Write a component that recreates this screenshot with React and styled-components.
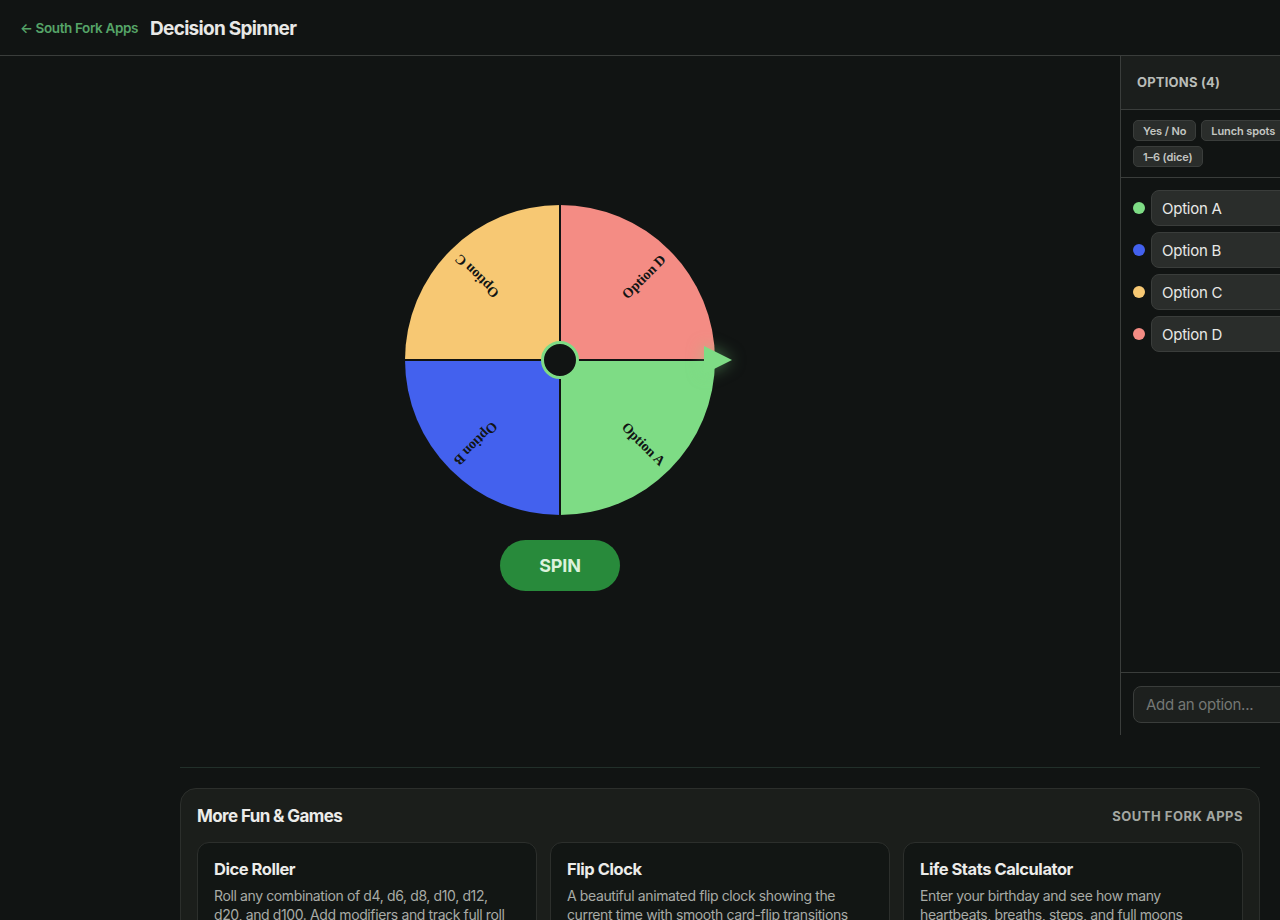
import React, { useState } from 'react';
import styled, { createGlobalStyle } from 'styled-components';

const GlobalStyle = createGlobalStyle`
  html, body {
    margin: 0;
    padding: 0;
    background: #111413;
    overflow-x: hidden;
  }
  * {
    box-sizing: border-box;
  }
`;

const Page = styled.div`
  width: 1440px;
  color: #e8e8e6;
  font-family: Inter, "Noto Sans", sans-serif;
`;

const Header = styled.header`
  height: 56px;
  display: flex;
  align-items: center;
  gap: 12px;
  padding: 0 20px;
  border-bottom: 1px solid #3a3d3b;
`;

const BackLink = styled.a`
  color: #56a468;
  font-size: 13.5px;
  font-weight: 600;
  letter-spacing: -0.38px;
  text-decoration: none;
`;

const Title = styled.h1`
  margin: 0;
  padding-top: 1px;
  font-size: 19px;
  font-weight: 700;
  letter-spacing: -0.7px;
  color: #e8e8e6;
`;

const Main = styled.main`
  display: flex;
  height: 679px;
`;

const Stage = styled.section`
  flex: 1;
  display: flex;
  flex-direction: column;
  align-items: center;
  gap: 25px;
  padding-top: 149px;
`;

const WheelWrap = styled.div`
  position: relative;
  width: 310px;
  height: 310px;
`;

const Pointer = styled.svg`
  position: absolute;
  left: 299px;
  top: 141px;
  filter: drop-shadow(0 0 8px rgba(126, 220, 133, 0.5));
`;

const SpinButton = styled.button`
  width: 120px;
  height: 51px;
  border: none;
  border-radius: 26px;
  background: #288a3b;
  color: #dcf2dc;
  font-family: inherit;
  font-size: 18px;
  font-weight: 700;
  letter-spacing: -0.2px;
  cursor: pointer;
`;

const Panel = styled.aside`
  width: 320px;
  display: flex;
  flex-direction: column;
  border-left: 1px solid #3a3d3b;
`;

const PanelHead = styled.div`
  height: 54px;
  display: flex;
  align-items: center;
  padding: 0 16px 2px;
  background: #1b1e1c;
  border-bottom: 1px solid #3a3d3b;
  color: #b9bcb8;
  font-size: 13px;
  font-weight: 700;
  letter-spacing: 0.2px;
`;

const Presets = styled.div`
  height: 68px;
  padding: 10px 12px 0;
  border-bottom: 1px solid #3a3d3b;
`;

const PresetRow = styled.div`
  display: flex;
  flex-wrap: wrap;
  gap: 5px;
  width: 180px;
`;

const Chip = styled.button`
  height: 21px;
  padding: 0 9px;
  border: 1px solid #3a3d3b;
  border-radius: 5px;
  background: #2a2d2b;
  color: #c4c6c2;
  font-family: inherit;
  font-size: 11px;
  font-weight: 600;
  letter-spacing: -0.1px;
  cursor: pointer;
`;

const OptionList = styled.div`
  flex: 1;
  display: flex;
  flex-direction: column;
  gap: 6px;
  padding: 12px;
`;

const OptionRow = styled.div`
  display: flex;
  align-items: center;
  gap: 6px;
`;

const Dot = styled.span`
  width: 12px;
  height: 12px;
  flex: none;
  border-radius: 50%;
  background: ${(p) => p.$color};
`;

const OptionInput = styled.input`
  flex: 1;
  min-width: 0;
  height: 36px;
  padding: 0 10px;
  border: 1px solid #3a3d3b;
  border-radius: 8px;
  background: #2a2d2b;
  color: #e8e8e6;
  font-family: inherit;
  font-size: 15px;
  letter-spacing: -0.25px;
  outline: none;
`;

const PanelFoot = styled.div`
  height: 63px;
  padding: 13px 12px 0;
  background: #111413;
  border-top: 1px solid #3a3d3b;
`;

const AddInput = styled.input`
  width: 100%;
  height: 37px;
  padding: 0 12px;
  border: 1px solid #3a3d3b;
  border-radius: 8px;
  background: #1d201e;
  color: #e8e8e6;
  font-family: inherit;
  font-size: 15px;
  letter-spacing: -0.3px;
  outline: none;

  &::placeholder {
    color: #747774;
  }
`;

const Below = styled.div`
  width: 1080px;
  margin: 32px auto 40px;
  padding-top: 20px;
  border-top: 1px solid #22302a;
`;

const MoreCard = styled.section`
  padding: 16px;
  border: 1px solid #2c2f2c;
  border-radius: 16px;
  background: #1b1e1b;
`;

const MoreHead = styled.div`
  display: flex;
  align-items: center;
  justify-content: space-between;
  height: 22px;
  margin-bottom: 15px;
`;

const MoreTitle = styled.h2`
  margin: 0;
  font-size: 17px;
  font-weight: 700;
  letter-spacing: -0.6px;
  color: #ececea;
`;

const Brand = styled.span`
  color: #a4a7a2;
  font-size: 13px;
  font-weight: 700;
  letter-spacing: 0.5px;
`;

const AppGrid = styled.div`
  display: grid;
  grid-template-columns: repeat(3, 1fr);
  gap: 13px;
`;

const AppCard = styled.a`
  display: block;
  padding: 15px 16px 16px;
  border: 1px solid #2c2f2c;
  border-radius: 12px;
  background: #121614;
  text-decoration: none;
`;

const AppName = styled.h3`
  margin: 0 0 6px;
  font-size: 16.5px;
  line-height: 22px;
  font-weight: 700;
  letter-spacing: -0.45px;
  color: #ececea;
`;

const AppText = styled.p`
  margin: 0;
  max-width: 300px;
  font-size: 14px;
  line-height: 19px;
  letter-spacing: -0.38px;
  color: #a8aba6;
`;

const options = [
  { label: 'Option A', color: '#7edc85' },
  { label: 'Option B', color: '#4361ee' },
  { label: 'Option C', color: '#f7c873' },
  { label: 'Option D', color: '#f48c84' },
];

const apps = [
  {
    name: 'Dice Roller',
    text: 'Roll any combination of d4, d6, d8, d10, d12, d20, and d100. Add modifiers and track full roll history as you play.',
  },
  {
    name: 'Flip Clock',
    text: 'A beautiful animated flip clock showing the current time with smooth card-flip transitions and a fullscreen mode.',
  },
  {
    name: 'Life Stats Calculator',
    text: "Enter your birthday and see how many heartbeats, breaths, steps, and full moons you've lived through.",
  },
];

function Wheel() {
  const r = 155;
  const slice = (Math.PI * 2) / options.length;

  return (
    <svg width="310" height="310" viewBox="-155 -155 310 310">
      {options.map((opt, i) => {
        const a0 = i * slice;
        const a1 = (i + 1) * slice;
        const d = `M0 0 L${r * Math.cos(a0)} ${r * Math.sin(a0)} A${r} ${r} 0 0 1 ${r * Math.cos(a1)} ${r * Math.sin(a1)} Z`;
        return <path key={opt.label} d={d} fill={opt.color} />;
      })}
      {options.map((opt, i) => (
        <line
          key={opt.label}
          x2={r * Math.cos(i * slice)}
          y2={r * Math.sin(i * slice)}
          stroke="#111413"
          strokeWidth="2"
        />
      ))}
      {options.map((opt, i) => (
        <text
          key={opt.label}
          transform={`rotate(${45 + i * 90})`}
          x="146"
          y="5"
          textAnchor="end"
          fontFamily='"Liberation Serif", serif'
          fontSize="14"
          fontWeight="700"
          fill="#111413"
        >
          {opt.label}
        </text>
      ))}
      <circle r="17.5" fill="#111413" stroke="#7edc85" strokeWidth="3" />
    </svg>
  );
}

export default function App() {
  const [items, setItems] = useState(options.map((o) => o.label));
  const [draft, setDraft] = useState('');

  return (
    <Page>
      <GlobalStyle />
      <Header>
        <BackLink href="#">← South Fork Apps</BackLink>
        <Title>Decision Spinner</Title>
      </Header>
      <Main>
        <Stage>
          <WheelWrap>
            <Wheel />
            <Pointer width="28" height="28" viewBox="0 0 28 28">
              <polygon points="0,0 28,14 0,28" fill="#7edc85" />
            </Pointer>
          </WheelWrap>
          <SpinButton>SPIN</SpinButton>
        </Stage>
        <Panel>
          <PanelHead>OPTIONS (4)</PanelHead>
          <Presets>
            <PresetRow>
              <Chip>Yes / No</Chip>
              <Chip>Lunch spots</Chip>
              <Chip>1–6 (dice)</Chip>
            </PresetRow>
          </Presets>
          <OptionList>
            {items.map((label, i) => (
              <OptionRow key={i}>
                <Dot $color={options[i].color} />
                <OptionInput
                  value={label}
                  onChange={(e) => setItems(items.map((v, j) => (j === i ? e.target.value : v)))}
                />
              </OptionRow>
            ))}
          </OptionList>
          <PanelFoot>
            <AddInput
              placeholder="Add an option..."
              value={draft}
              onChange={(e) => setDraft(e.target.value)}
            />
          </PanelFoot>
        </Panel>
      </Main>
      <Below>
        <MoreCard>
          <MoreHead>
            <MoreTitle>More Fun &amp; Games</MoreTitle>
            <Brand>SOUTH FORK APPS</Brand>
          </MoreHead>
          <AppGrid>
            {apps.map((app) => (
              <AppCard href="#" key={app.name}>
                <AppName>{app.name}</AppName>
                <AppText>{app.text}</AppText>
              </AppCard>
            ))}
          </AppGrid>
        </MoreCard>
      </Below>
    </Page>
  );
}
